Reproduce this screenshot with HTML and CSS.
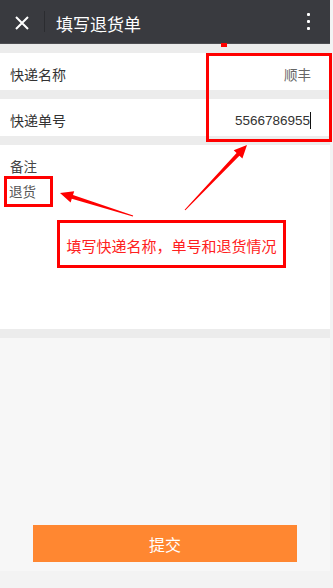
FILE: index.html
```html
<!DOCTYPE html>
<html lang="zh">
<head>
<meta charset="utf-8">
<title>填写退货单</title>
<link rel="stylesheet" href="styles.css">
</head>
<body>
<div class="app">
  <header class="topbar">
    <span class="close">
      <svg width="16" height="16" viewBox="0 0 16 16"><path d="M2 2 L14 14 M14 2 L2 14" stroke="#fff" stroke-width="2" fill="none"/></svg>
    </span>
    <span class="divider"></span>
    <h1 class="title">填写退货单</h1>
    <span class="more"><i></i><i></i><i></i></span>
  </header>
  <section class="form">
    <div class="row">
      <span class="label">快递名称</span>
      <span class="value muted">顺丰</span>
    </div>
    <div class="row">
      <span class="label">快递单号</span>
      <span class="value">5566786955<span class="caret"></span></span>
    </div>
    <div class="notes">
      <div class="notes-label">备注</div>
      <div class="notes-text">退货</div>
    </div>
  </section>
  <div class="spacer"></div>
  <div class="actions">
    <button class="submit">提交</button>
  </div>
</div>
<svg class="annot" width="333" height="588" viewBox="0 0 333 588">
  <rect x="221" y="43" width="6" height="4" fill="#ff0000"/>
  <rect x="207.5" y="54.5" width="123" height="86" fill="none" stroke="#ff0000" stroke-width="3"/>
  <rect x="5.5" y="177.5" width="46" height="28" fill="none" stroke="#ff0000" stroke-width="3"/>
  <rect x="58.5" y="221.5" width="226" height="45" fill="#fff" stroke="#ff0000" stroke-width="3"/>
  <polygon points="133.15,215.5 73.0,195.0 74.2,191.2 60,193 70.6,202.6 71.8,198.8 132.85,216.5" fill="#ff0000"/>
  <polygon points="185.4,210.3 239.4,155.8 242.4,158.5 247,145 233.7,150.3 236.6,153.0 184.6,209.7" fill="#ff0000"/>
</svg>
<div class="callout">填写快递名称，单号和退货情况</div>
</body>
</html>
```
FILE: styles.css
```css
* { box-sizing: border-box; }
html, body {
  margin: 0;
  padding: 0;
}
body {
  width: 333px;
  height: 588px;
  background: #f3f3f3;
  position: relative;
  overflow: hidden;
  font-family: "Noto Sans CJK SC", "Noto Sans", sans-serif;
}
.app {
  width: 330px;
  height: 571px;
  background: #f7f7f7;
  display: flex;
  flex-direction: column;
}
.topbar {
  height: 44px;
  background: #393a3f;
  border-bottom: 1px solid #4d4e52;
  display: flex;
  align-items: center;
  padding-left: 14px;
}
.close {
  width: 16px;
  height: 16px;
  display: flex;
  margin-top: 2px;
}
.divider {
  width: 1px;
  height: 21px;
  background: #2b2c30;
  margin-left: 14px;
}
.title {
  margin: 4px 0 0 11px;
  font-size: 17px;
  font-weight: normal;
  color: #fff;
  flex: 1;
  line-height: 1;
}
.more {
  display: flex;
  flex-direction: column;
  gap: 4px;
  margin-right: 20px;
}
.more i {
  display: block;
  width: 3px;
  height: 3px;
  background: #fff;
  border-radius: 1px;
}
.form {
  background: #ececec;
  padding: 9px 0;
  display: flex;
  flex-direction: column;
  gap: 9px;
}
.row {
  height: 37px;
  background: #fff;
  display: flex;
  align-items: center;
  justify-content: space-between;
  padding: 5px 19px 0 10px;
}
.label {
  font-size: 14px;
  color: #333;
}
.value {
  font-family: "Liberation Sans", "Noto Sans CJK SC", sans-serif;
  font-size: 13.5px;
  color: #333;
  display: flex;
  align-items: center;
}
.value.muted {
  font-family: "Noto Sans CJK SC", sans-serif;
  font-size: 13.5px;
  color: #666;
}
.caret {
  display: inline-block;
  width: 1px;
  height: 17px;
  background: #111;
  margin-left: 0;
}
.notes {
  height: 184px;
  background: #fff;
  padding: 12px 10px 0 9px;
}
.notes-label {
  font-size: 13.5px;
  color: #444;
  line-height: 18px;
  padding-left: 1px;
}
.notes-text {
  font-size: 13.5px;
  color: #555;
  line-height: 18px;
  margin-top: 7px;
}
.spacer { flex: 1; }
.actions {
  display: flex;
  justify-content: center;
  padding-bottom: 9px;
}
.submit {
  width: 264px;
  height: 37px;
  border: none;
  background: #ff8731;
  color: #fff;
  font-family: "Noto Sans CJK SC", sans-serif;
  font-size: 16px;
  padding: 0;
}
.annot {
  position: absolute;
  left: 0;
  top: 0;
  pointer-events: none;
}
.callout {
  position: absolute;
  left: 60px;
  top: 224px;
  width: 223px;
  height: 42px;
  display: flex;
  align-items: center;
  justify-content: center;
  font-size: 15px;
  color: #ff2020;
  line-height: 1;
}
```
